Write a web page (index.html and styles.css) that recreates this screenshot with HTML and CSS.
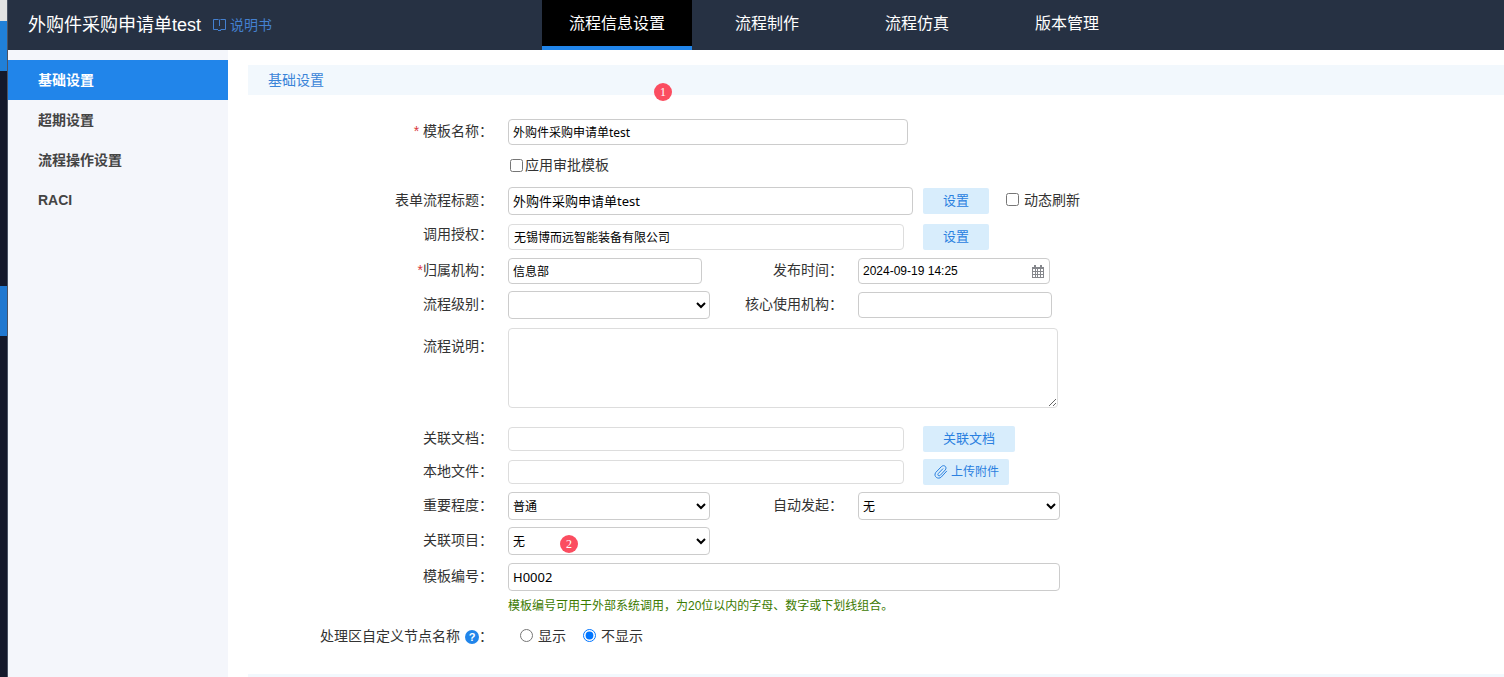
FILE: index.html
```html
<!DOCTYPE html>
<html lang="zh-CN">
<head>
<meta charset="utf-8">
<title>外购件采购申请单test</title>
<link rel="stylesheet" href="styles.css">
</head>
<body>
<div class="app">
  <div class="rail"><span class="rail-top"></span><span class="rail-blue"></span><span class="rail-dark"></span><span class="rail-active"></span></div>
  <div class="window">
    <header class="header">
      <div class="brand">
        <h1 class="title">外购件采购申请单test</h1>
        <a class="manual" href="#manual">
          <svg width="13" height="12" viewBox="0 0 13 12" fill="none" stroke="currentColor" aria-hidden="true"><path d="M5.500 .5H.5v10h4.500M7.500 10.500h5V.5h-5M6.500 .5V7M5 11.500h3"/></svg>
          <span>说明书</span>
        </a>
      </div>
      <nav class="tabs">
        <a class="tab tab-active" href="#info">流程信息设置</a>
        <a class="tab" href="#make">流程制作</a>
        <a class="tab" href="#simulate">流程仿真</a>
        <a class="tab" href="#version">版本管理</a>
      </nav>
    </header>
    <div class="body">
      <nav class="sidebar">
        <a class="side-item side-active" href="#basic">基础设置</a>
        <a class="side-item" href="#overdue">超期设置</a>
        <a class="side-item" href="#operation">流程操作设置</a>
        <a class="side-item" href="#raci">RACI</a>
      </nav>
      <main class="content">
        <h2 class="section-title">基础设置<span class="marker marker-one">1</span></h2>
        <form class="form">
          <div class="row">
            <label class="label" for="name"><span class="required">*</span> 模板名称：</label>
            <div class="wide"><input class="control w-name" id="name" type="text" value="外购件采购申请单test"></div>
          </div>
          <div class="row row-check">
            <div class="wide second"><label class="check"><input class="tick" type="checkbox">应用审批模板</label></div>
          </div>
          <div class="row row-title">
            <label class="label" for="formTitle">表单流程标题：</label>
            <div class="wide">
              <div class="slot"><input class="control tall w-title" id="formTitle" type="text" value="外购件采购申请单test"></div>
              <button class="button" type="button">设置</button>
              <label class="check refresh"><input class="tick" type="checkbox">动态刷新</label>
            </div>
          </div>
          <div class="row">
            <label class="label label-high" for="auth">调用授权：</label>
            <div class="wide">
              <div class="slot"><input class="control soft w-long" id="auth" type="text" value="无锡博而远智能装备有限公司"></div>
              <button class="button" type="button">设置</button>
            </div>
          </div>
          <div class="row">
            <label class="label" for="org"><span class="required">*</span>归属机构：</label>
            <input class="control w-short" id="org" type="text" value="信息部">
            <label class="label" for="time">发布时间：</label>
            <div class="date">
              <input class="control date-input" id="time" type="text" value="2024-09-19 14:25">
              <svg class="calendar" width="12" height="13" viewBox="0 0 12 13" aria-hidden="true"><path fill="#85878c" d="M0 2h2V0h2v2h4V0h2v2h2v11H0z"/><path fill="#fff" d="M1 4h2v2H1zM4 4h1v2H4zM6 4h2v2H6zM9 4h2v2H9zM1 7h2v2H1zM4 7h1v2H4zM6 7h2v2H6zM9 7h2v2H9zM1 10h2v2H1zM4 10h1v2H4zM6 10h2v2H6zM9 10h2v2H9z"/></svg>
            </div>
          </div>
          <div class="row">
            <label class="label" for="level">流程级别：</label>
            <select class="control tall" id="level"><option></option></select>
            <label class="label" for="core">核心使用机构：</label>
            <input class="control w-short" id="core" type="text">
          </div>
          <div class="row row-area">
            <label class="label" for="desc">流程说明：</label>
            <div class="wide"><textarea class="control soft area" id="desc"></textarea></div>
          </div>
          <div class="row">
            <label class="label" for="doc">关联文档：</label>
            <div class="wide">
              <div class="slot"><input class="control soft low w-long" id="doc" type="text"></div>
              <button class="button" type="button">关联文档</button>
            </div>
          </div>
          <div class="row row-check">
            <label class="label" for="file">本地文件：</label>
            <div class="wide">
              <div class="slot"><input class="control soft low w-long" id="file" type="text"></div>
              <button class="button upload" type="button"><svg width="14" height="14" viewBox="0 0 14 14" fill="none" stroke="currentColor" stroke-linecap="round" aria-hidden="true"><path d="M12.600 6.200L7.300 12C4.300 15-1 11.500 1.700 7.500L7.300 1.700c2.700-2.700 6.200.4 4 3.200L6.300 10.300c-1.500 1.400-3.300-.2-2-1.800L8.800 3.800"/></svg>上传附件</button>
            </div>
          </div>
          <div class="row row-roomy">
            <label class="label" for="priority">重要程度：</label>
            <select class="control tall" id="priority"><option>普通</option></select>
            <label class="label" for="auto">自动发起：</label>
            <select class="control tall" id="auto"><option>无</option></select>
          </div>
          <div class="row">
            <label class="label" for="project">关联项目：</label>
            <div class="marked"><select class="control tall" id="project"><option>无</option></select><span class="marker marker-two">2</span></div>
          </div>
          <div class="row row-code">
            <label class="label" for="code">模板编号：</label>
            <div class="wide"><input class="control tall w-code" id="code" type="text" value="H0002"></div>
          </div>
          <div class="row row-hint"><p class="hint wide second">模板编号可用于外部系统调用，为20位以内的字母、数字或下划线组合。</p></div>
          <div class="row row-radio">
            <div class="label" id="nodeName">处理区自定义节点名称<button class="help" type="button" aria-label="帮助">?</button>：</div>
            <div class="wide radios" role="radiogroup" aria-labelledby="nodeName">
              <label class="check"><input class="radio" type="radio" name="node">显示</label>
              <label class="check"><input class="radio" type="radio" name="node" checked>不显示</label>
            </div>
          </div>
        </form>
        <div class="next-section"></div>
      </main>
    </div>
  </div>
</div>
</body>
</html>
```
FILE: styles.css
```css
* { box-sizing: border-box; }
body {
  margin: 0;
  overflow: hidden;
  font-family: "Liberation Sans", "Noto Sans CJK SC", sans-serif;
  font-size: 14px;
  line-height: 20px;
  color: #333;
  background: #fff;
}
a { text-decoration: none; }
input, select, textarea, button { font-family: inherit; margin: 0; }
.app { display: flex; height: 100vh; }

.rail { flex: 0 0 8px; display: flex; flex-direction: column; background: #14192b; border-right: 1px solid #4a5364; }
.rail-top { height: 21px; background: #e2e2e2; }
.rail-blue { height: 50px; background: #2080d8; }
.rail-dark { height: 215px; }
.rail-active { height: 50px; background: #2078d0; }

.window { flex: 1; min-width: 0; display: flex; flex-direction: column; }
.header { flex: 0 0 50px; display: flex; background: #263143; }
.brand { flex: 0 0 534px; display: flex; align-items: center; gap: 12px; padding-left: 20px; }
.title { margin: 0; font-size: 18px; font-weight: 400; line-height: 26px; color: #fff; }
.manual { display: flex; align-items: center; gap: 4px; color: #4480d0; }
.tabs { display: flex; }
.tab {
  width: 150px;
  height: 50px;
  line-height: 48px;
  border-bottom: 4px solid transparent;
  text-align: center;
  font-size: 16px;
  color: #fff;
}
.tab-active { background: #000; border-color: #2185ea; }

.body { flex: 1; min-height: 0; display: flex; }
.sidebar { flex: 0 0 220px; padding-top: 10px; background: #f4f6fb; }
.side-item { display: block; padding-left: 30px; line-height: 40px; font-weight: 700; color: #444; }
.side-active { background: #2185ea; color: #fff; }

.content { flex: 1; min-width: 0; padding: 15px 0 0 20px; }
.section-title {
  position: relative;
  margin: 0;
  padding-left: 20px;
  font-size: 14px;
  font-weight: 400;
  line-height: 30px;
  color: #3a84d8;
  background: #f2f8fd;
}
.form { padding: 20px 0 17px; }
.row {
  display: grid;
  grid-template-columns: 245px 202px 118px 202px;
  column-gap: 15px;
  align-items: center;
  min-height: 34px;
}
.row-check { min-height: 32px; }
.row-title { min-height: 39px; }
.row-roomy { min-height: 36px; }
.row-code { min-height: 38px; }
.row-hint { min-height: 20px; }
.row-radio { min-height: 41px; }
.row-area { align-items: start; padding: 6px 0 14px; }
.row-area .label { padding-top: 8px; }
.label { padding-bottom: 2px; text-align: right; white-space: nowrap; }
.label-high { padding-bottom: 6px; }
.required { color: #d9363e; }
.wide { grid-column: 2 / -1; display: flex; align-items: center; white-space: nowrap; }
.slot { flex: 0 0 415px; display: flex; }

.control {
  width: 100%;
  height: 26px;
  padding: 0 4px;
  border: 1px solid #ccc;
  border-radius: 4px;
  font-family: "Noto Sans", "Noto Sans CJK SC", sans-serif;
  font-size: 12px;
  color: #000;
  background: #fff;
}
select.control { padding: 0; }
.tall { height: 28px; }
.low { height: 24px; }
.soft { border-color: #ddd; }
.w-name { width: 400px; }
.w-title { width: 405px; font-size: 13px; }
.w-long { width: 396px; padding-left: 5px; }
.w-short { width: 194px; }
.w-code { width: 553px; font-size: 13px; }
.area { display: block; width: 550px; height: 80px; resize: both; }

.date { position: relative; display: flex; width: 192px; }
.date-input { font-family: "Liberation Sans", sans-serif; }
.calendar { position: absolute; right: 6px; top: 7px; }

.button {
  height: 26px;
  padding: 0 20px;
  border: 0;
  border-radius: 2px;
  font-size: 13px;
  line-height: 24px;
  color: #2a80e0;
  background: #d8edfc;
}
.upload { display: flex; align-items: center; gap: 3px; padding: 0 10px 0 11px; font-size: 12px; }

.check { display: flex; align-items: center; }
.tick { width: 13px; height: 13px; margin: 0 2px; }
.refresh { margin-left: 15px; padding-bottom: 2px; }
.refresh .tick { margin-right: 5px; }
.radios { gap: 17px; padding: 0 0 2px 12px; }
.radio { width: 13px; height: 13px; margin: 0 5px 0 0; }
.hint { margin: 0; font-size: 12px; color: #3c7a00; }
.second { grid-column-start: 2; }
.help {
  width: 14px;
  height: 14px;
  margin: 0 0 0 5px;
  padding: 0;
  border: 0;
  border-radius: 50%;
  font-size: 11px;
  font-weight: 700;
  line-height: 14px;
  color: #fff;
  background: #2185ea;
}

.marked { position: relative; display: flex; }
.marker {
  position: absolute;
  width: 18px;
  height: 18px;
  border-radius: 50%;
  font-family: "Liberation Serif", serif;
  font-size: 12px;
  line-height: 18px;
  text-align: center;
  color: #fff;
  background: #fb4d60;
}
.marker-one { left: 406px; top: 18px; }
.marker-two { left: 52px; top: 8px; }
.next-section { height: 30px; background: #f2f8fd; }
```
